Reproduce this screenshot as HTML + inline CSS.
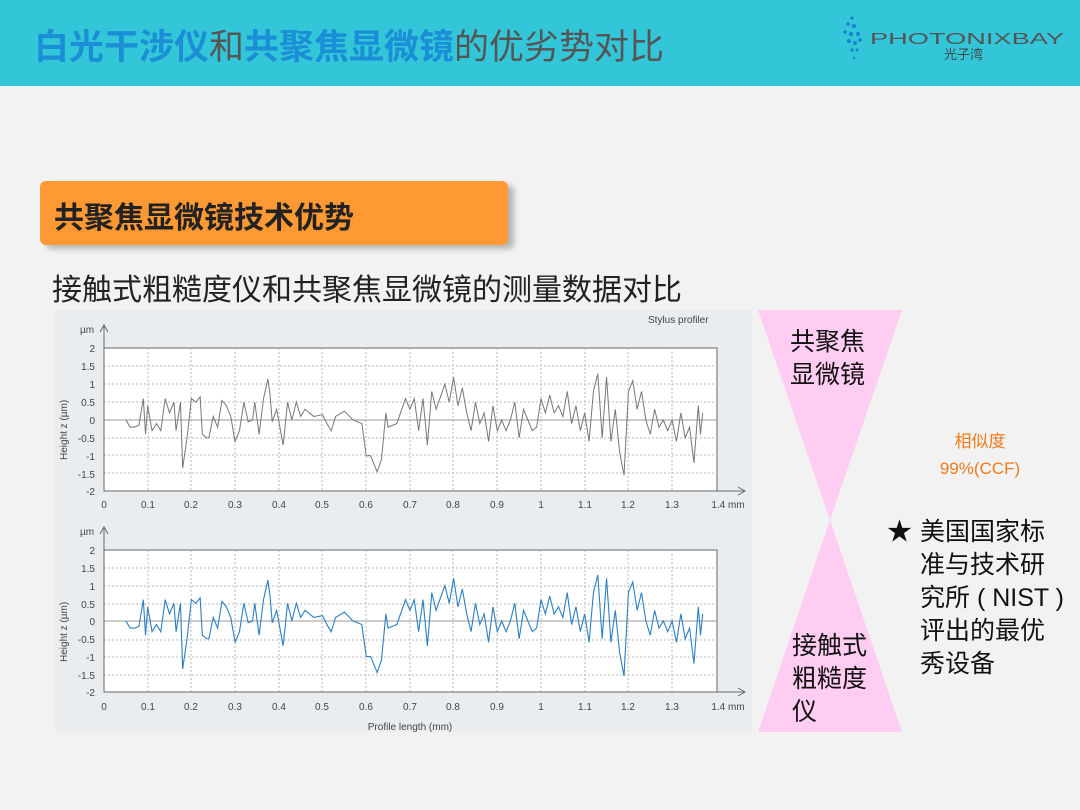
<!DOCTYPE html>
<html><head><meta charset="utf-8"><style>
body{margin:0;width:1080px;height:810px;overflow:hidden;background:#f2f2f2;font-family:"Liberation Sans","Noto Sans CJK SC",sans-serif;position:relative}
.hdr{position:absolute;left:0;top:0;width:1080px;height:86px;background:#33c6d9}
.ttl{position:absolute;left:34px;top:19px;font-size:35px;font-weight:bold;color:#1a8fd6}
.ttl span{color:#555;font-weight:normal}
.box{position:absolute;left:40px;top:181px;width:468px;height:64px;background:#ff9933;border-radius:6px;box-shadow:6px 4px 6px rgba(0,0,0,.25)}
.box div{position:absolute;left:14px;top:12px;font-size:30px;font-weight:bold;color:#222}
.sub{position:absolute;left:52px;top:265px;font-size:30px;color:#222}
.t{position:absolute;font-size:25px;color:#111;line-height:33px}
</style></head><body>
<div class="hdr"></div>
<div class="ttl">白光干涉仪<span>和</span>共聚焦显微镜<span>的优劣势对比</span></div>
<svg style="position:absolute;left:840px;top:14px" width="230" height="50">
<g fill="#1a7fd0"><circle cx="12" cy="4" r="1.6"/><circle cx="8" cy="10" r="1.8"/><circle cx="14" cy="12" r="2"/><circle cx="5" cy="18" r="1.8"/><circle cx="11" cy="20" r="2.2"/><circle cx="18" cy="20" r="2"/><circle cx="9" cy="27" r="2"/><circle cx="15" cy="29" r="2"/><circle cx="20" cy="26" r="1.8"/><circle cx="12" cy="36" r="1.6"/><circle cx="17" cy="36" r="1.5"/><circle cx="14" cy="44" r="1.3"/></g>
<text x="30" y="30" font-family="Liberation Sans" font-size="16" fill="#555" textLength="194" lengthAdjust="spacingAndGlyphs">PHOTONIXBAY</text>
<text x="104" y="45" font-family="Noto Sans CJK SC" font-size="13" fill="#444">光子湾</text>
</svg>
<div class="box"><div>共聚焦显微镜技术优势</div></div>
<div class="sub">接触式粗糙度仪和共聚焦显微镜的测量数据对比</div>

<svg style="position:absolute;left:0;top:0" width="1080" height="810">
<defs>
<polyline id="w" fill="none" vector-effect="non-scaling-stroke" points="0.05,0 0.06,-0.2 0.07,-0.2 0.08,-0.15 0.09,0.6 0.095,-0.4 0.10,0.4 0.11,-0.3 0.12,-0.1 0.13,-0.3 0.14,0.6 0.15,0.2 0.16,0.5 0.165,-0.3 0.175,0.5 0.18,-1.35 0.19,-0.5 0.20,0.6 0.21,0.5 0.22,0.65 0.225,-0.4 0.235,-0.5 0.24,-0.5 0.25,0.1 0.26,-0.2 0.27,0.55 0.28,0.4 0.29,0.1 0.30,-0.6 0.31,-0.3 0.32,0.5 0.33,-0.05 0.34,0 0.345,0.5 0.355,-0.4 0.365,0.6 0.375,1.15 0.38,0.7 0.385,-0.05 0.395,0.3 0.41,-0.7 0.42,0.5 0.43,0 0.44,0.5 0.45,0.1 0.46,0.3 0.47,0.2 0.48,0.1 0.50,0.15 0.51,-0.1 0.52,-0.3 0.53,0.1 0.55,0.25 0.57,0 0.59,-0.1 0.60,-1 0.61,-1 0.625,-1.45 0.635,-1.1 0.645,0.2 0.65,-0.2 0.67,-0.1 0.69,0.6 0.70,0.3 0.71,0.6 0.72,-0.3 0.73,0.6 0.74,-0.7 0.75,0.8 0.76,0.3 0.78,1 0.79,0.5 0.80,1.2 0.81,0.4 0.82,0.9 0.83,0.2 0.84,-0.3 0.85,0.5 0.86,-0.1 0.87,0.2 0.88,-0.6 0.89,0.4 0.90,-0.3 0.91,0 0.92,-0.3 0.93,0 0.94,0.5 0.95,-0.5 0.96,0.3 0.97,0 0.98,-0.3 0.99,-0.2 1.00,0.6 1.01,0.2 1.02,0.7 1.03,0.2 1.04,0.4 1.05,0.1 1.06,0.8 1.07,-0.1 1.08,0.4 1.09,-0.3 1.10,0.2 1.11,-0.6 1.12,0.8 1.13,1.3 1.14,-0.5 1.15,1.2 1.16,-0.6 1.17,0.3 1.18,-0.9 1.19,-1.55 1.20,0.8 1.21,1.1 1.22,0.3 1.23,0.8 1.24,0 1.25,-0.4 1.26,0.3 1.27,-0.2 1.28,0 1.29,-0.3 1.30,0 1.31,-0.6 1.32,0.2 1.33,-0.5 1.34,-0.2 1.35,-1.2 1.36,0.4 1.365,-0.4 1.37,0.2"/>
<g id="grid" stroke="#bbb" stroke-dasharray="2,2" stroke-width="1">
<path d="M148 0V143M191 0V143M235 0V143M279 0V143M322 0V143M366 0V143M410 0V143M453 0V143M497 0V143M541 0V143M585 0V143M628 0V143M672 0V143"/>
<path d="M104 18H717M104 36H717M104 54H717M104 90H717M104 107H717M104 125H717"/>
</g>
</defs>
<rect x="55" y="310" width="697" height="422" fill="#e9edf0"/>
<g font-family="Liberation Sans" font-size="10" fill="#444">
<text x="648" y="323">Stylus profiler</text>
<rect x="104" y="348" width="613" height="143" fill="#fff" stroke="#666"/>
<g transform="translate(0,348)"><use href="#grid"/></g>
<line x1="104" y1="420" x2="717" y2="420" stroke="#999"/>
<line x1="104" y1="491" x2="745" y2="491" stroke="#666"/><path d="M738 487L745 491L738 495" fill="none" stroke="#666"/>
<line x1="104" y1="491" x2="104" y2="325" stroke="#666"/><path d="M100 332L104 325L108 332" fill="none" stroke="#666"/>
<g transform="translate(104,420) scale(437,-35.7)"><use href="#w" stroke="#777" stroke-width="1"/></g>
<text x="80" y="333">µm</text>
<g text-anchor="end"><text x="95" y="352">2</text><text x="95" y="370">1.5</text><text x="95" y="388">1</text><text x="95" y="406">0.5</text><text x="95" y="424">0</text><text x="95" y="442">-0.5</text><text x="95" y="460">-1</text><text x="95" y="478">-1.5</text><text x="95" y="495">-2</text></g>
<g text-anchor="middle"><text x="104" y="508">0</text><text x="148" y="508">0.1</text><text x="191" y="508">0.2</text><text x="235" y="508">0.3</text><text x="279" y="508">0.4</text><text x="322" y="508">0.5</text><text x="366" y="508">0.6</text><text x="410" y="508">0.7</text><text x="453" y="508">0.8</text><text x="497" y="508">0.9</text><text x="541" y="508">1</text><text x="585" y="508">1.1</text><text x="628" y="508">1.2</text><text x="672" y="508">1.3</text><text x="728" y="508">1.4 mm</text></g>
<text transform="translate(67,460) rotate(-90)">Height z (µm)</text>
<rect x="104" y="550" width="613" height="142" fill="#fff" stroke="#666"/>
<g transform="translate(0,550)"><use href="#grid"/></g>
<line x1="104" y1="621" x2="717" y2="621" stroke="#999"/>
<line x1="104" y1="692" x2="745" y2="692" stroke="#666"/><path d="M738 688L745 692L738 696" fill="none" stroke="#666"/>
<line x1="104" y1="692" x2="104" y2="527" stroke="#666"/><path d="M100 534L104 527L108 534" fill="none" stroke="#666"/>
<g transform="translate(104,621) scale(437,-35.5)"><use href="#w" stroke="#2c7fc0" stroke-width="1.1"/></g>
<text x="80" y="535">µm</text>
<g text-anchor="end"><text x="95" y="554">2</text><text x="95" y="572">1.5</text><text x="95" y="590">1</text><text x="95" y="608">0.5</text><text x="95" y="625">0</text><text x="95" y="643">-0.5</text><text x="95" y="661">-1</text><text x="95" y="679">-1.5</text><text x="95" y="696">-2</text></g>
<g text-anchor="middle"><text x="104" y="710">0</text><text x="148" y="710">0.1</text><text x="191" y="710">0.2</text><text x="235" y="710">0.3</text><text x="279" y="710">0.4</text><text x="322" y="710">0.5</text><text x="366" y="710">0.6</text><text x="410" y="710">0.7</text><text x="453" y="710">0.8</text><text x="497" y="710">0.9</text><text x="541" y="710">1</text><text x="585" y="710">1.1</text><text x="628" y="710">1.2</text><text x="672" y="710">1.3</text><text x="728" y="710">1.4 mm</text></g>
<text x="410" y="730" text-anchor="middle">Profile length (mm)</text>
<text transform="translate(67,662) rotate(-90)">Height z (µm)</text>
</g>
<polygon points="758,310 902,310 830,520" fill="#ffccf2"/>
<polygon points="830,520 902,732 758,732" fill="#ffccf2"/>
</svg>
<div class="t" style="left:790px;top:326px">共聚焦<br>显微镜</div>
<div class="t" style="left:792px;top:630px">接触式<br>粗糙度<br>仪</div>
<div style="position:absolute;left:930px;top:428px;width:100px;text-align:center;font-size:17px;color:#f07a1a;line-height:27px">相似度<br>99%(CCF)</div>
<div class="t" style="left:887px;top:516px">★</div>
<div class="t" style="left:920px;top:516px">美国国家标<br>准与技术研<br>究所 ( NIST )<br>评出的最优<br>秀设备</div>
</body></html>
